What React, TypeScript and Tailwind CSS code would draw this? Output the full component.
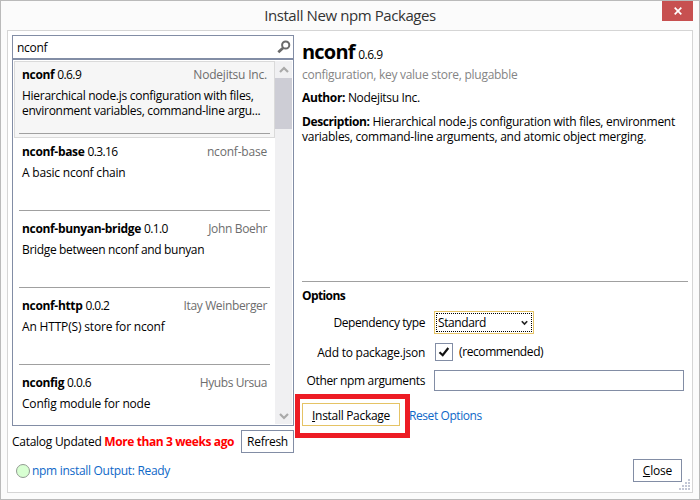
import React from "react";

type Pkg = { name: string; version: string; author: string; authorClass: string; lines: string[]; lineClass: string };

const packages: Pkg[] = [
  { name: "nconf", version: "0.6.9", author: "Nodejitsu Inc.", authorClass: "tracking-[-0.2px]", lines: ["Hierarchical node.js configuration with files,", "environment variables, command-line argu..."], lineClass: "tracking-[-0.27px]" },
  { name: "nconf-base", version: "0.3.16", author: "nconf-base", authorClass: "tracking-[-0.2px]", lines: ["A basic nconf chain"], lineClass: "tracking-[-0.2px]" },
  { name: "nconf-bunyan-bridge", version: "0.1.0", author: "John Boehr", authorClass: "tracking-[-0.35px]", lines: ["Bridge between nconf and bunyan"], lineClass: "tracking-[-0.33px]" },
  { name: "nconf-http", version: "0.0.2", author: "Itay Weinberger", authorClass: "tracking-[-0.35px]", lines: ["An HTTP(S) store for nconf"], lineClass: "tracking-[-0.17px]" },
  { name: "nconfig", version: "0.0.6", author: "Hyubs Ursua", authorClass: "tracking-[-0.42px]", lines: ["Config module for node"], lineClass: "tracking-[-0.2px]" },
];

function PackageRow({ pkg, selected }: { pkg: Pkg; selected: boolean }) {
  return (
    <li className={`h-[77px] shrink-0 border pt-[4px] ${selected ? "border-[#dadada] bg-[#f6f6f6]" : "border-transparent"}`}>
      <div className="mx-[4px] flex h-[68px] flex-col border-b border-[#a0a0a0] px-[3px]">
        <div className="flex h-[17px] items-center justify-between">
          <span><b className="tracking-[-0.33px]">{pkg.name}</b> <span className="tracking-[-0.6px]">{pkg.version}</span></span>
          <span className={`text-[#6d6d6d] ${pkg.authorClass}`}>{pkg.author}</span>
        </div>
        <div className={`mt-[5px] leading-[15px] ${pkg.lineClass}`}>
          {pkg.lines.map((l) => <div key={l}>{l}</div>)}
        </div>
      </div>
    </li>
  );
}

function ResizeGrip() {
  const dots = [[10, 0], [7, 3], [10, 3], [4, 6], [7, 6], [10, 6], [1, 9], [4, 9], [7, 9], [10, 9]];
  return (
    <svg width="12" height="12" viewBox="0 0 12 12" className="self-end" fill="#c3c7d6">
      {dots.map(([x, y]) => <rect key={`${x}-${y}`} x={x - 1} y={y} width="2" height="2" />)}
    </svg>
  );
}

export default function App() {
  return (
    <div className="flex h-[500px] w-[700px] flex-col overflow-hidden border border-[#bababa] bg-[#fbfbfb] px-[6px] pb-[6px] font-['Open_Sans','Noto_Sans',sans-serif] text-[12px] leading-[16px] tracking-[-0.2px] text-black whitespace-nowrap">
      <header className="flex h-[29px] shrink-0">
        <div className="w-[31px]" />
        <h1 className="flex-1 pt-[4px] text-center text-[15px] leading-[20px] tracking-[-0.41px] text-[#333]">Install New npm Packages</h1>
        <button className="flex h-[20px] w-[31px] items-center justify-center bg-[#c75050]">
          <svg width="8" height="8" viewBox="0 0 8 8" stroke="#fff" strokeWidth="1.7"><path d="M.7.7 7.3 7.3M7.3.7.7 7.3" /></svg>
        </button>
      </header>
      <main className="flex min-h-0 flex-1 border border-[#d5d5d5] bg-white pl-[4px] pt-[4px]">
        <section className="flex w-[282px] shrink-0 flex-col">
          <div className="flex h-[24px] shrink-0 items-center justify-between border border-[#828da5] pl-[4px] pr-[2px]">
            <span className="pt-[2px] tracking-[-0.3px]">nconf</span>
            <svg width="14" height="14" viewBox="0 0 14 14" fill="none" stroke="#6a6a6a"><circle cx="8.7" cy="5" r="3.6" strokeWidth="2" /><path d="M6 8 1.3 12.3" strokeWidth="2.8" /></svg>
          </div>
          <div className="flex h-[367px] shrink-0 border border-[#828da5] p-[1px]">
            <ul className="flex h-full w-[261px] flex-col overflow-hidden">
              {packages.map((p, i) => <PackageRow key={p.name} pkg={p} selected={i === 0} />)}
            </ul>
            <div className="flex w-[17px] flex-col items-center bg-[#f0f0f2]">
              <div className="flex h-[17px] items-center"><svg width="10" height="8" viewBox="0 0 10 8" fill="none" stroke="#a9a9a9" strokeWidth="2.2"><path d="M1 6 5 2l4 4" /></svg></div>
              <div className="h-[51px] w-full bg-[#cdcdd5]" />
              <div className="mt-auto flex h-[17px] items-center"><svg width="10" height="8" viewBox="0 0 10 8" fill="none" stroke="#a9a9a9" strokeWidth="2.2"><path d="M1 2l4 4 4-4" /></svg></div>
            </div>
          </div>
          <div className="mt-[4px] flex h-[23px] items-center justify-between">
            <span className="tracking-[-0.27px]">Catalog Updated <b className="tracking-[-0.4px] text-[#f00]">More than 3 weeks ago</b></span>
            <button className="h-[23px] w-[53px] border border-[#828da5] tracking-[-0.3px]">Refresh</button>
          </div>
          <div className="mt-[9px] flex h-[16px] items-center gap-[2px] pl-[4px] text-[#0e68c8]">
            <span className="mt-px h-[14px] w-[14px] rounded-full border border-[#929b92] bg-[#d8ffd2]" />
            <span className="mt-px tracking-[-0.3px]">npm install Output: Ready</span>
          </div>
        </section>
        <section className="ml-[8px] flex w-[386px] shrink-0 flex-col">
          <div className="h-[246px]">
            <div className="h-[32px] leading-[33px]"><b className="text-[20px] tracking-[-0.8px]">nconf</b> <span className="ml-[0.5px] tracking-[-0.5px]">0.6.9</span></div>
            <div className="tracking-[-0.27px] text-[#858585]">configuration, key value store, plugabble</div>
            <div className="mt-[7px] tracking-[-0.33px]"><b className="tracking-[-0.35px]">Author:</b> Nodejitsu Inc.</div>
            <div className="mt-[8px] leading-[15px]">
              <div className="tracking-[-0.29px]"><b className="tracking-[-0.4px]">Description:</b> Hierarchical node.js configuration with files, environment</div>
              <div className="tracking-[-0.25px]">variables, command-line arguments, and atomic object merging.</div>
            </div>
          </div>
          <div className="h-px bg-[#a0a0a0]" />
          <b className="mt-[6px] tracking-[-0.6px]">Options</b>
          <div className="mt-[7px] flex items-center">
            <span className="w-[123px] text-right tracking-[-0.4px]">Dependency type</span>
            <div className="ml-[9px] h-[23px] w-[100px] border border-[#e5c365] p-[1px]">
              <div className="flex h-full items-center justify-between border border-dotted border-black pl-px pr-[3px]">
                <span className="tracking-[-0.4px]">Standard</span>
                <svg width="7" height="6" viewBox="0 0 7 6" fill="none" stroke="#222" strokeWidth="1.6"><path d="M.8 1.2 3.5 4 6.2 1.2" /></svg>
              </div>
            </div>
          </div>
          <div className="mt-[9px] flex items-center">
            <span className="w-[123px] pt-px text-right tracking-[-0.25px]">Add to package.json</span>
            <div className="ml-[10px] flex h-[18px] w-[18px] items-center justify-center border border-[#828da5]">
              <svg width="12" height="12" viewBox="0 0 12 12" fill="none" stroke="#111" strokeWidth="2.2"><path d="M1.5 6.2 4.7 9.2 10.3 2" /></svg>
            </div>
            <span className="ml-[6px] tracking-[-0.4px]">(recommended)</span>
          </div>
          <div className="mt-[9px] flex items-center">
            <span className="w-[123px] text-right tracking-[-0.36px]">Other npm arguments</span>
            <div className="ml-[9px] h-[21px] w-[250px] border border-[#828da5]" />
          </div>
          <div className="-ml-[7px] mt-[3px] flex items-center">
            <div className="z-10 h-[44px] w-[115px] border-[5px] border-[#ed1c24] bg-white pl-[2px] pt-[4px]">
              <button className="h-[23px] w-[98px] border border-[#e5c365] pt-[2px] tracking-[-0.3px]"><u>I</u>nstall Package</button>
            </div>
            <span className="-ml-[1px] tracking-[-0.42px] text-[#0e68c8]">Reset Options</span>
          </div>
          <div className="mt-[21px] flex h-[32px] justify-end">
            <button className="h-[23px] w-[49px] shrink-0 border border-[#828da5] pt-px"><u>C</u>lose</button>
            <div className="-ml-[3px] -mr-[3px] flex w-[12px] shrink-0"><ResizeGrip /></div>
          </div>
        </section>
      </main>
    </div>
  );
}
